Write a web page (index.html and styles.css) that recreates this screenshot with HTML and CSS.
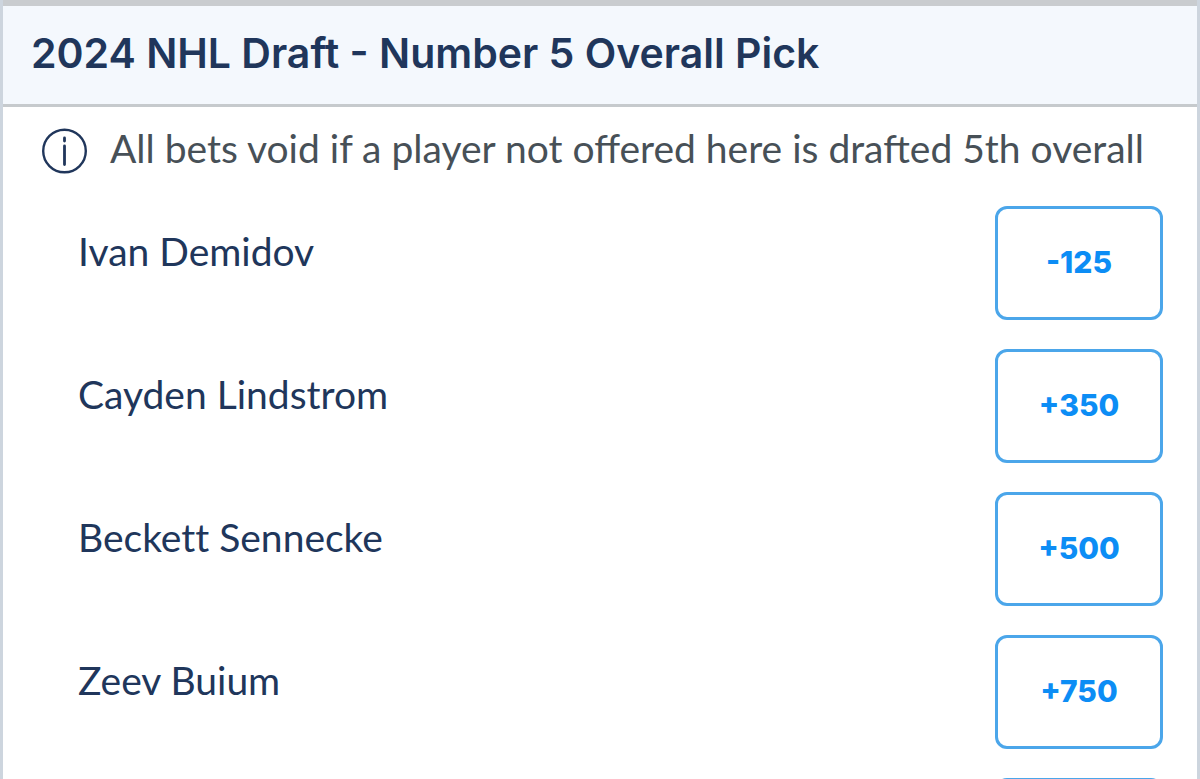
FILE: index.html
```
<!DOCTYPE html>
<html lang="en">
<head>
<meta charset="utf-8">
<meta name="viewport" content="width=device-width, initial-scale=1">
<title>2024 NHL Draft - Number 5 Overall Pick</title>
<link rel="stylesheet" href="styles.css">
</head>
<body>
<main class="market">
  <header class="market-header">
    <h1 class="market-title">2024 NHL Draft - Number 5 Overall Pick</h1>
  </header>
  <div class="note">
    <svg class="note-icon" viewBox="0 0 46 46" fill="none" stroke="currentColor" aria-hidden="true">
      <circle cx="22.5" cy="23" r="21.3" stroke-width="2.4"/>
      <path d="M22.5 10v3M22.5 18v18.5" stroke-width="2.8" stroke-linecap="round"/>
    </svg>
    <p class="note-text">All bets void if a player not offered here is drafted 5th overall</p>
  </div>
  <ul class="selections">
    <li class="selection"><label class="player" for="odds-1">Ivan Demidov</label><button class="odds" id="odds-1" type="button">-125</button></li>
    <li class="selection"><label class="player" for="odds-2">Cayden Lindstrom</label><button class="odds" id="odds-2" type="button">+350</button></li>
    <li class="selection"><label class="player" for="odds-3">Beckett Sennecke</label><button class="odds" id="odds-3" type="button">+500</button></li>
    <li class="selection"><label class="player" for="odds-4">Zeev Buium</label><button class="odds" id="odds-4" type="button">+750</button></li>
    <li class="selection"><span class="player"></span><button class="odds" type="button" aria-label="Odds"></button></li>
  </ul>
</main>
</body>
</html>
```
FILE: styles.css
```
* {
  box-sizing: border-box;
}

body {
  margin: 0;
  background: #fff;
  font-family: Lato, "Open Sans", sans-serif;
  color: #20365b;
}

.market {
  height: 100vh;
  overflow: hidden;
  border: solid #cdd5de;
  border-width: 0 3px;
}

.market-header {
  padding: 23px 28px 27px;
  border-top: 6px solid #c9cccf;
  border-bottom: 3px solid #c6cacd;
  background: #f4f8fd;
}

.market-title {
  margin: 0;
  font-family: Inter, sans-serif;
  font-size: 41px;
  line-height: 48px;
  font-weight: 600;
}

.note {
  display: flex;
  align-items: flex-start;
  gap: 22px;
  padding: 21px 39px 32px;
}

.note-icon {
  flex: none;
  width: 46px;
  height: 46px;
}

.note-text {
  margin: 0;
  color: #475057;
  font-size: 39px;
  line-height: 40px;
  white-space: nowrap;
}

.selections {
  display: grid;
  gap: 29px;
  margin: 0;
  padding: 0 34px 0 75px;
  list-style: none;
}

.selection {
  display: flex;
  justify-content: space-between;
  align-items: flex-start;
}

.player {
  padding-top: 21px;
  font-size: 39px;
  line-height: 48px;
  font-variant-ligatures: none;
}

.odds {
  width: 168px;
  height: 114px;
  padding: 0 0 3px;
  border: 3px solid #4ba6ea;
  border-radius: 12px;
  background: #fff;
  color: #0c8df5;
  font-family: Inter, sans-serif;
  font-size: 30px;
  line-height: 40px;
  font-weight: 800;
}
```
